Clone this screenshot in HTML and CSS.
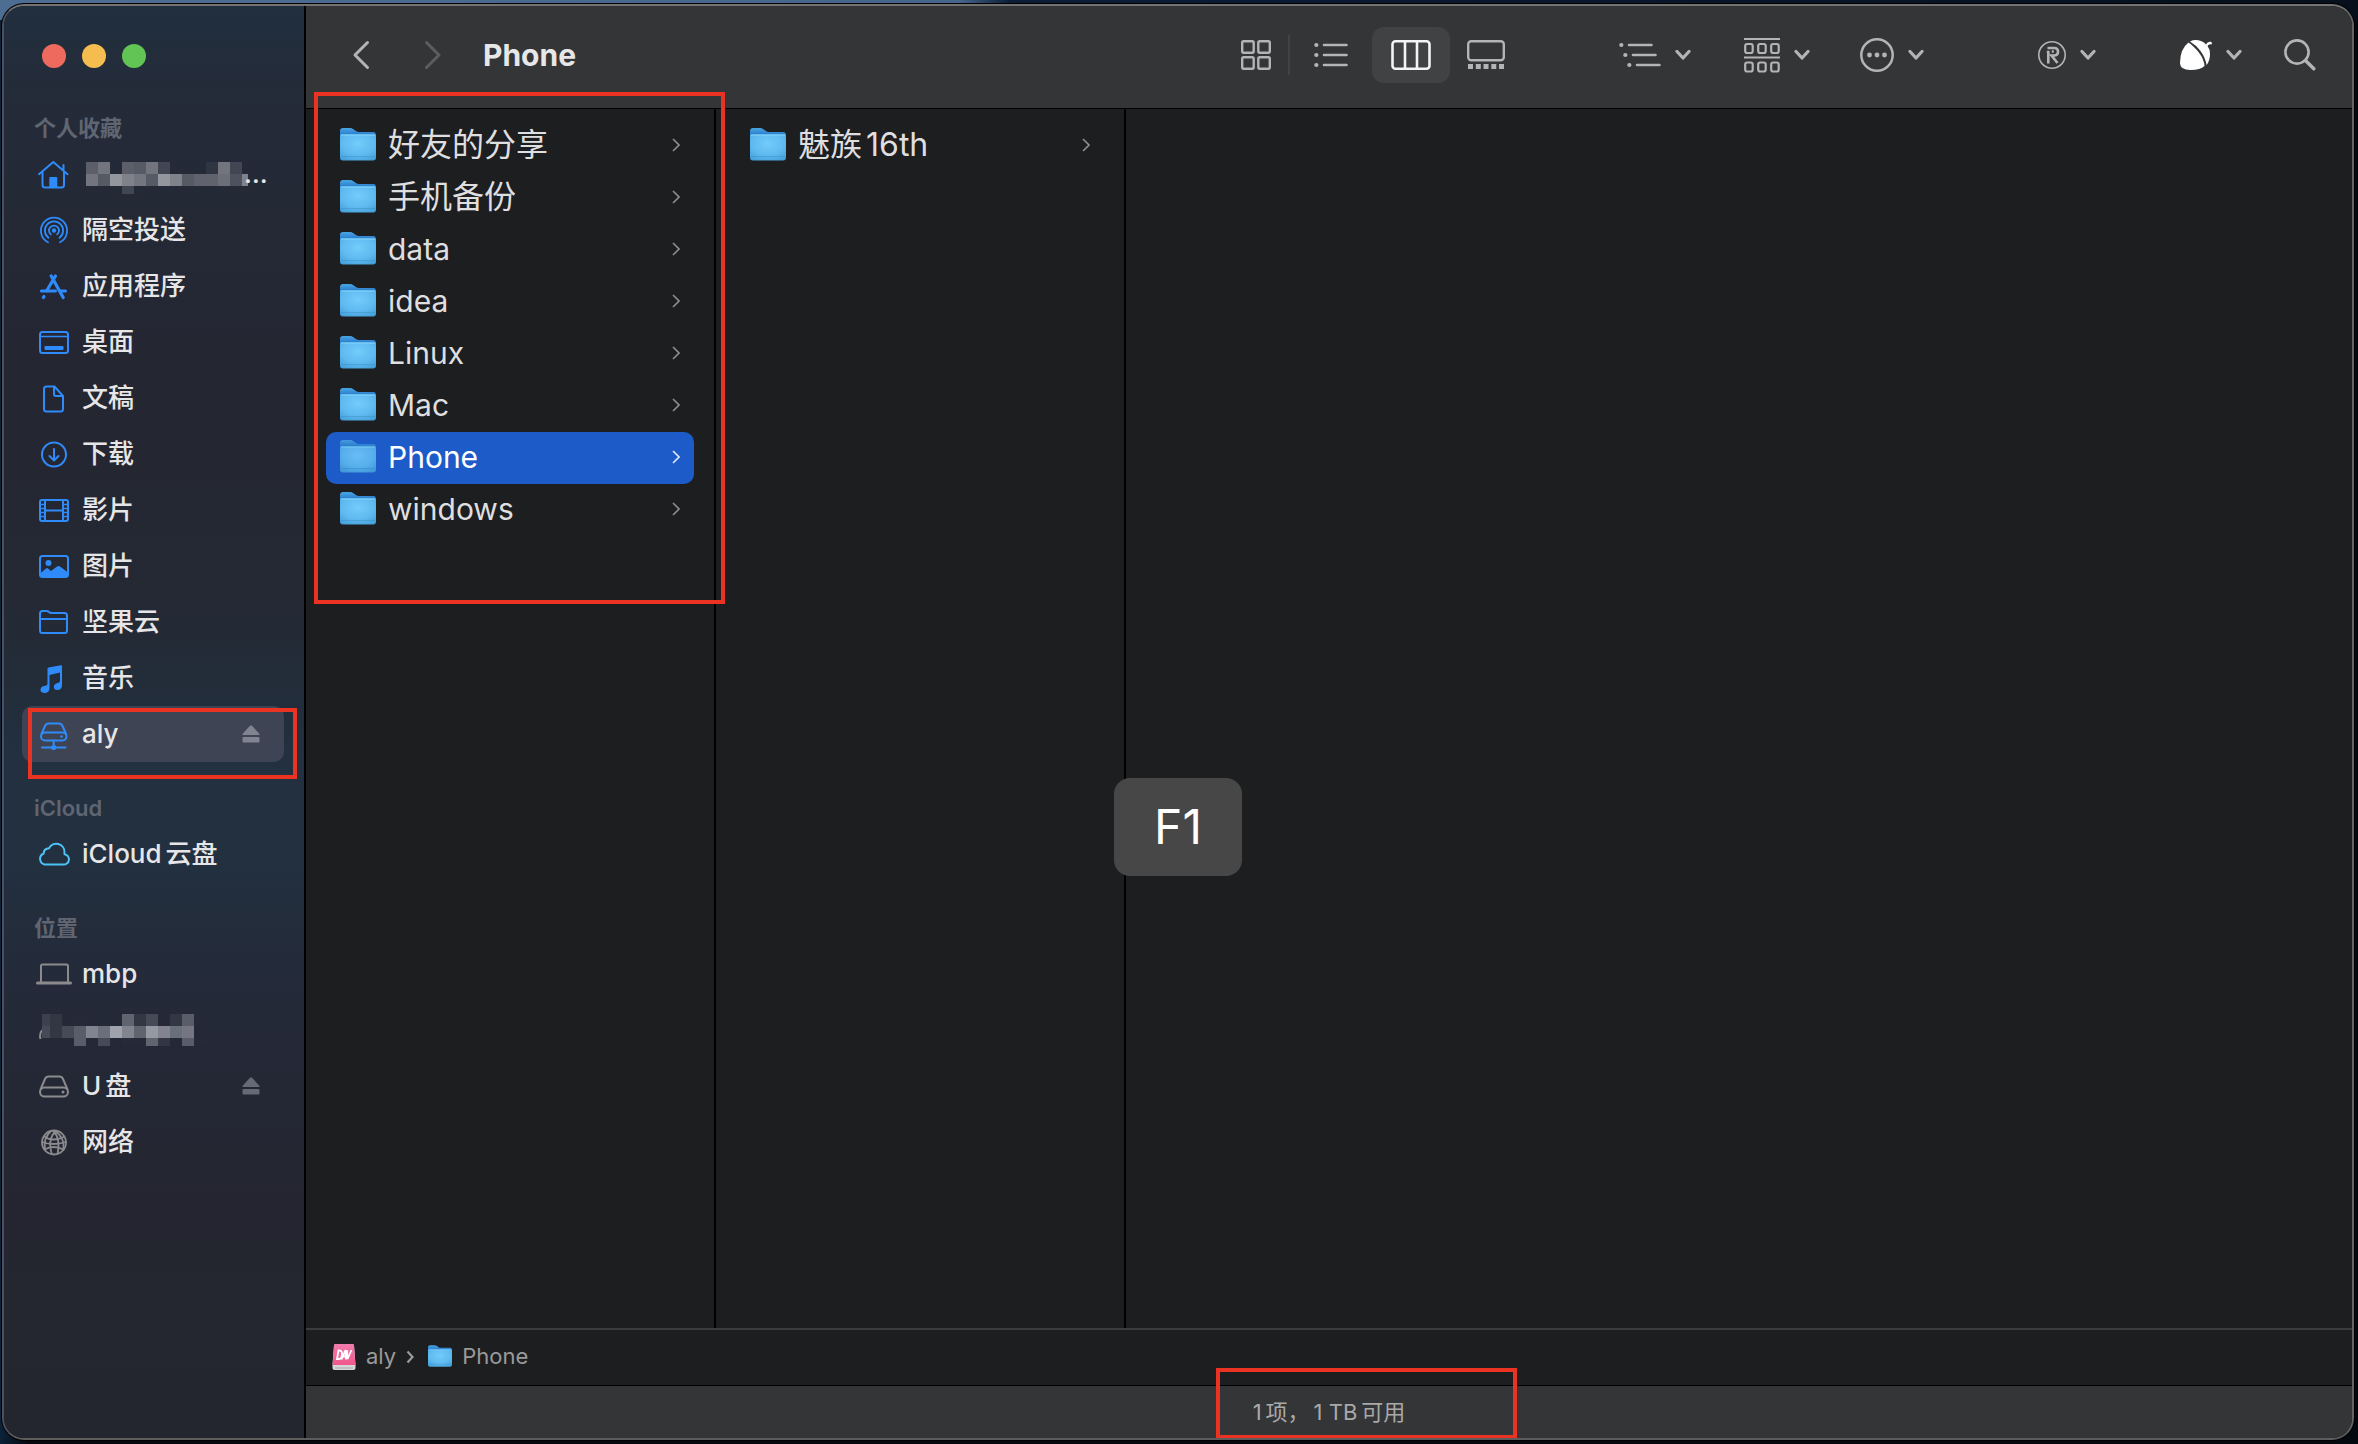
FILE: index.html
```html
<!DOCTYPE html>
<html lang="zh-CN">
<head>
<meta charset="utf-8">
<title>Phone</title>
<link rel="stylesheet" href="styles.css">
</head>
<body>
<svg class="defs" width="0" height="0" aria-hidden="true">
  <defs>
    <linearGradient id="folder-back" x1="0" y1="0" x2="0" y2="1">
      <stop offset="0" stop-color="#4aa5e2"/><stop offset=".2" stop-color="#2f82d0"/><stop offset="1" stop-color="#2f82d0"/>
    </linearGradient>
    <radialGradient id="folder-front" cx=".5" cy=".35" r=".75">
      <stop offset="0" stop-color="#74cbfb"/><stop offset=".6" stop-color="#5fbaf0"/><stop offset="1" stop-color="#459fd9"/>
    </radialGradient>
    <linearGradient id="dav-pink" x1="0" y1="0" x2="0" y2="1">
      <stop offset="0" stop-color="#f27cae"/><stop offset="1" stop-color="#f0578a"/>
    </linearGradient>
  </defs>
  <symbol id="folder" viewBox="0 0 36 34">
    <path d="M0 3q0-3 3-3h7q2 0 3 1l3 2q1 1 3 1h14q3 0 3 3v22H0z" fill="url(#folder-back)"/>
    <path d="M0 7.500q0-1 1-1h34q1 0 1 1v22q0 3-3 3H3q-3 0-3-3z" fill="url(#folder-front)"/>
    <path d="M1 7h34" stroke="#86dafc" stroke-width="1"/>
    <path d="M.5 28.500h35" stroke="#3f97cf" stroke-width="1" opacity=".6"/>
  </symbol>
  <symbol id="chevron-right" viewBox="0 0 8 14"><path d="M1 1l6 6-6 6" fill="none" stroke="currentColor" stroke-width="1.600"/></symbol>
  <symbol id="chevron-down" viewBox="0 0 16 12"><path d="M2 2.500l6 6.500 6-6.500" fill="none" stroke="currentColor" stroke-width="3.200" stroke-linecap="round" stroke-linejoin="round"/></symbol>
  <symbol id="eject" viewBox="0 0 18 18"><path d="M8 .7q1-.9 2 0l7.300 8q.7 1.300-.8 1.300h-15q-1.500 0-.8-1.300z" fill="currentColor"/><rect x=".5" y="12" width="17" height="5.500" rx="1" fill="currentColor"/></symbol>
</svg>

<div class="window">
  <aside class="sidebar">
    <div class="lights">
      <button class="light close" aria-label="关闭"></button>
      <button class="light minimize" aria-label="最小化"></button>
      <button class="light maximize" aria-label="全屏"></button>
    </div>

    <nav class="section">
      <h2>个人收藏</h2>
      <ul>
        <li><a class="place" href="#home">
          <svg class="icon" viewBox="0 0 32 32" fill="none" stroke="currentColor" stroke-width="2" stroke-linejoin="round" stroke-linecap="round"><path d="M1 16.200L15.300 4l14.200 12.200M4.500 14v13q0 2.500 2.500 2.500h16.500q2.500 0 2.500-2.500V14M25.500 12V7"/><path d="M12.300 29v-9h6v9z" fill="currentColor"/></svg>
          <svg class="mosaic name" width="162" height="32" viewBox="0 0 162 32" shape-rendering="crispEdges">
            <path fill="#5c5f69" d="M0 0h12v12H0zM36 0h12v12H36z"/><path fill="#72757d" d="M12 0h12v12H12zM60 0h12v12H60zM132 0h12v12h-12zM0 12h12v12H0z"/><path fill="#565a65" d="M48 0h12v12H48zM12 12h12v12H12zM60 12h12v12H60zM96 12h12v12H96z"/><path fill="#414652" d="M72 0h12v12H72zM144 0h12v12h-12zM36 24h12v8H36z"/><path fill="#303542" d="M120 0h12v12h-12z"/><path fill="#94969d" d="M24 12h12v12H24zM72 12h12v12H72z"/><path fill="#7f828b" d="M36 12h12v12H36zM84 12h12v12H84zM156 12h6v12h-6z"/><path fill="#737680" d="M48 12h12v12H48z"/><path fill="#60636e" d="M108 12h24v12h-24z"/><path fill="#6c6f78" d="M132 12h12v12h-12z"/><path fill="#4e525f" d="M144 12h12v12h-12z"/>
          </svg><span>…</span></a></li>
        <li><a class="place" href="#airdrop">
          <svg class="icon" viewBox="0 0 32 32" fill="none" stroke="currentColor" stroke-width="1.800" stroke-linecap="round"><circle cx="16" cy="16.500" r="2.200" fill="currentColor" stroke="none"/><path d="M12.800 20.400a5 5 0 1 1 6.400 0M10.500 23.800a9.100 9.100 0 1 1 11 0M10 28.300a13.100 13.100 0 1 1 12 0"/></svg>
          <span>隔空投送</span></a></li>
        <li><a class="place" href="#applications">
          <svg class="icon" viewBox="0 0 32 32" fill="none" stroke="currentColor" stroke-width="3.200" stroke-linecap="round"><path d="M17.500 6L8.500 21M13.200 6l12 21.500M3.500 21h14M22.500 21h5M6 26.500l-.6 1"/></svg>
          <span>应用程序</span></a></li>
        <li><a class="place" href="#desktop">
          <svg class="icon" viewBox="0 0 32 32" fill="none" stroke="currentColor" stroke-width="2"><rect x="2" y="6" width="28" height="21" rx="2.500"/><path d="M2 10.500h28" stroke-width="1.500"/><rect x="6.500" y="20" width="19" height="4" rx="1" fill="currentColor" stroke="none"/></svg>
          <span>桌面</span></a></li>
        <li><a class="place" href="#documents">
          <svg class="icon" viewBox="0 0 32 32" fill="none" stroke="currentColor" stroke-width="2" stroke-linejoin="round"><path d="M8.500 4.500h8l8.500 9.500v13q0 2.500-2.500 2.500h-14Q6 29.500 6 27V7q0-2.500 2.500-2.500zM16 4.500v7.500q0 2 2 2h7"/></svg>
          <span>文稿</span></a></li>
        <li><a class="place" href="#downloads">
          <svg class="icon" viewBox="0 0 32 32" fill="none" stroke="currentColor" stroke-width="2" stroke-linecap="round" stroke-linejoin="round"><circle cx="16" cy="16.500" r="12"/><path d="M16 11v11.500M11.500 18l4.500 4.500 4.500-4.500"/></svg>
          <span>下载</span></a></li>
        <li><a class="place" href="#movies">
          <svg class="icon" viewBox="0 0 32 32" fill="none" stroke="currentColor" stroke-width="2"><rect x="2" y="6" width="28" height="21" rx="2"/><path d="M7 6v21M25 6v21M7 16.500h18"/><path d="M2 10.500h5M2 14.500h5M2 18.500h5M2 22.500h5M25 10.500h5M25 14.500h5M25 18.500h5M25 22.500h5" stroke-width="1.500"/></svg>
          <span>影片</span></a></li>
        <li><a class="place" href="#pictures">
          <svg class="icon" viewBox="0 0 32 32" fill="none" stroke="currentColor" stroke-width="2"><rect x="2" y="6" width="28" height="21" rx="2.500"/><circle cx="10.500" cy="13" r="3" fill="currentColor" stroke="none"/><path d="M2 23.500l6-5q1-.8 2 0l3 2.500 6-4.500q1.500-1 3 0l8 6v4H3z" fill="currentColor" stroke="none"/></svg>
          <span>图片</span></a></li>
        <li><a class="place" href="#nutstore">
          <svg class="icon" viewBox="0 0 32 32" fill="none" stroke="currentColor" stroke-width="2" stroke-linejoin="round"><path d="M2 24.500V7.500Q2 5 4.500 5h4q1.500 0 2.500 1t2.500 1h13q2.500 0 2.500 2.500v15q0 2.500-2.500 2.500h-22Q2 27 2 24.500zM2 13h27"/></svg>
          <span>坚果云</span></a></li>
        <li><a class="place" href="#music">
          <svg class="icon" viewBox="0 0 32 32" fill="currentColor"><path d="M9.500 6.800q0-1 1-1.200L23 3.200q1-.2 1 .8v19q0 4.500-4 5-4 .3-4.200-3 0-3.200 4-4 2.200-.3 2.200-2v-8.500L11.500 13v13q0 4.300-3.800 4.900-5 .3-5.200-3 0-3 3.600-3.800 3.400-.5 3.400-2.100z"/></svg>
          <span>音乐</span></a></li>
        <li><a class="place selected" href="#aly">
          <svg class="icon" viewBox="0 0 32 32" fill="none" stroke="currentColor" stroke-width="2" stroke-linejoin="round"><path d="M3.200 16.500L7 8q1-2.500 3.500-2.500h10.500Q23.500 5.500 24.500 8l3.800 8.500"/><rect x="3" y="14.500" width="25.500" height="8" rx="4"/><path d="M15.700 22.500v6M4 29.500h23.500" stroke-linecap="round"/><circle cx="23.500" cy="18.500" r="1.300" fill="currentColor" stroke="none"/><circle cx="15.700" cy="29.500" r="2.600" fill="currentColor" stroke="none"/></svg>
          <span>aly</span><svg class="eject"><use href="#eject"/></svg></a>
          <i class="mark mark-place"></i></li>
      </ul>
    </nav>

    <nav class="section">
      <h2>iCloud</h2>
      <ul>
        <li><a class="place cloud" href="#icloud">
          <svg class="icon" viewBox="0 0 32 32" fill="none" stroke="currentColor" stroke-width="2" stroke-linejoin="round"><path d="M6.500 26.500a5.800 5.800 0 0 1-.8-11q0-4.800 5.300-5.300a8.200 8.200 0 0 1 15.500 4q-.1 1.300 0 2a5.200 5.200 0 0 1-1.500 10.300z"/></svg>
          <span>iCloud<span class="join">云盘</span></span></a></li>
      </ul>
    </nav>

    <nav class="section">
      <h2>位置</h2>
      <ul>
        <li><a class="place device" href="#mbp">
          <svg class="icon wide" viewBox="0 0 36 32" fill="none" stroke="currentColor" stroke-width="2"><path d="M5 24V8q0-1.500 1.500-1.500h24q1.500 0 1.500 1.500v16"/><path d="M1.500 25h33" stroke-width="3" stroke-linecap="round"/></svg>
          <span>mbp</span></a></li>
        <li><a class="place device masked" href="#disk">
          <svg class="mosaic" width="168" height="32" viewBox="0 0 168 32" shape-rendering="crispEdges">
            <path fill="none" stroke="#8b8b8e" stroke-width="2" shape-rendering="auto" d="M4.500 16q-3.500 3-2 9"/>
            <path fill="#3c414d" d="M4 0h8v12H4z"/><path fill="#333744" d="M12 0h12v24H12zM96 0h12v12H96zM132 0h12v12h-12zM120 24h12v8h-12z"/><path fill="#262a38" d="M36 0h12v12H36zM84 24h24v8H84zM156 24h12v8h-12z"/><path fill="#60646f" d="M84 0h12v12H84zM96 12h12v12H96zM108 24h12v8h-12z"/><path fill="#464a57" d="M108 0h12v12h-12zM4 12h8v12H4zM24 12h12v12H24zM60 24h12v8H60z"/><path fill="#595d69" d="M144 0h12v12h-12zM36 12h12v20H36zM144 24h12v8h-12z"/><path fill="#828590" d="M48 12h12v12H48zM84 12h12v12H84zM120 12h12v12h-12z"/><path fill="#6a6f7c" d="M60 12h12v12H60zM132 12h12v12h-12z"/><path fill="#a0a3ac" d="M72 12h12v12H72z"/><path fill="#9799a2" d="M108 12h12v12h-12z"/><path fill="#747781" d="M144 12h12v12h-12z"/>
          </svg></a></li>
        <li><a class="place device" href="#usb">
          <svg class="icon" viewBox="0 0 32 32" fill="none" stroke="currentColor" stroke-width="2" stroke-linejoin="round"><path d="M2.500 19.500L7 9q1-2.500 3.500-2.500h11Q24 6.500 25 9l4.500 10.500"/><rect x="2" y="17.500" width="28" height="9" rx="4.500"/><circle cx="25" cy="22" r="1.500" fill="currentColor" stroke="none"/></svg>
          <span>U<span class="join">盘</span></span><svg class="eject"><use href="#eject"/></svg></a></li>
        <li><a class="place device" href="#network">
          <svg class="icon" viewBox="0 0 32 32" fill="none" stroke="currentColor" stroke-width="1.800"><circle cx="16" cy="16.500" r="12"/><path d="M18 4.500q-9 9-4 24M15 4.500q8 8 4.500 24M17 4.800Q27 12 25.500 24M13 5Q5 12 7 24M6 10.500q9 6 21 0M4 16q11 4 24 0M6.500 23.500q9-5 19 0"/></svg>
          <span>网络</span></a></li>
      </ul>
    </nav>
  </aside>

  <main class="main">
    <header class="toolbar">
      <button class="nav" aria-label="后退"><svg width="18" height="30" viewBox="0 0 18 30"><path d="M15.500 2.500L3 15l12.500 12.500" fill="none" stroke="currentColor" stroke-width="3" stroke-linecap="round" stroke-linejoin="round"/></svg></button>
      <button class="nav" aria-label="前进" disabled><svg width="18" height="30" viewBox="0 0 18 30"><path d="M2.500 2.500L15 15 2.500 27.500" fill="none" stroke="currentColor" stroke-width="3" stroke-linecap="round" stroke-linejoin="round"/></svg></button>
      <h1>Phone</h1>

      <div class="views">
        <button class="view narrow" aria-label="图标"><svg width="30" height="30" viewBox="0 0 30 30" fill="none" stroke="currentColor" stroke-width="2.400"><rect x="1.200" y="1.200" width="11.500" height="11.500" rx="1.500"/><rect x="17.300" y="1.200" width="11.500" height="11.500" rx="1.500"/><rect x="1.200" y="17.300" width="11.500" height="11.500" rx="1.500"/><rect x="17.300" y="17.300" width="11.500" height="11.500" rx="1.500"/></svg></button>
        <span class="separator"></span>
        <button class="view" aria-label="列表"><svg width="34" height="26" viewBox="0 0 34 26" fill="none" stroke="currentColor" stroke-width="2.600" stroke-linecap="round"><path d="M10 3h22.500M10 13h22.500M10 23h22.500"/><path d="M2.300 3h.1M2.300 13h.1M2.300 23h.1" stroke-width="4.200"/></svg></button>
        <button class="view active" aria-label="分栏"><svg width="40" height="30" viewBox="0 0 40 30" fill="none" stroke="currentColor" stroke-width="2.600"><rect x="1.500" y="1.300" width="37" height="27.400" rx="3"/><path d="M14 1v28M26 1v28"/></svg></button>
        <button class="view mid" aria-label="画廊"><svg width="38" height="30" viewBox="0 0 38 30"><rect x="1.200" y="1.200" width="35.600" height="19" rx="3" fill="none" stroke="currentColor" stroke-width="2.400"/><path d="M1 24h5v5H1zM8.800 24h5v5h-5zM16.500 24h5v5h-5zM24.300 24h5v5h-5zM32 24h5v5h-5z" fill="currentColor"/></svg></button>
      </div>

      <div class="menus">
        <button class="menu outline" aria-label="大纲"><svg width="42" height="26" viewBox="0 0 42 26" fill="none" stroke="currentColor" stroke-width="2.600" stroke-linecap="round"><path d="M10 3h22.500M14 13h22.500M18 23h22.500"/><path d="M2.300 3h.1M6.300 13h.1M10.300 23h.1" stroke-width="4.200"/></svg><svg class="chev"><use href="#chevron-down"/></svg></button>
        <button class="menu" aria-label="分组"><svg width="36" height="36" viewBox="0 0 36 36" fill="none" stroke="currentColor" stroke-width="2.200"><path d="M0 2h36M0 20.500h36"/><rect x="1.200" y="7" width="7.500" height="9" rx="2"/><rect x="14.200" y="7" width="7.500" height="9" rx="2"/><rect x="27.200" y="7" width="7.500" height="9" rx="2"/><rect x="1.200" y="25.500" width="7.500" height="9" rx="2"/><rect x="14.200" y="25.500" width="7.500" height="9" rx="2"/><rect x="27.200" y="25.500" width="7.500" height="9" rx="2"/></svg><svg class="chev"><use href="#chevron-down"/></svg></button>
        <button class="menu" aria-label="更多"><svg width="34" height="34" viewBox="0 0 34 34"><circle cx="17" cy="17" r="15.700" fill="none" stroke="currentColor" stroke-width="2.500"/><circle cx="9.500" cy="17" r="2.400" fill="currentColor"/><circle cx="17" cy="17" r="2.400" fill="currentColor"/><circle cx="24.500" cy="17" r="2.400" fill="currentColor"/></svg><svg class="chev"><use href="#chevron-down"/></svg></button>
      </div>

      <button class="menu registered" aria-label="注册标记"><svg width="28" height="28" viewBox="0 0 28 28" fill="none" stroke="currentColor"><circle cx="14" cy="14" r="13.200" stroke-width="1.600"/><path d="M9.500 7H16q4 0 4 3.700t-4 3.800h-2.500l6 7.500M10.300 12v10.500M13.800 10.500h2" stroke-width="2.600"/><circle cx="10.200" cy="11" r="1.600" fill="currentColor" stroke="none"/></svg><svg class="chev"><use href="#chevron-down"/></svg></button>
      <button class="menu nut" aria-label="坚果云"><svg class="acorn" width="32" height="30" viewBox="0 0 32 30" fill="currentColor"><path d="M8.500 2.500Q0 9 0 23q0 7 10.500 7 10 0 14-4-.5-7-6-14Q13 5.500 8.500 2.500z"/><path d="M10 1.500Q15-1 21 1q3.500 1 5 3.500Q27.500 1 31 1.800q1.500 1 .5 2.700-2.500-1-4 1.500Q30 9 30 14q0 7-3.500 11-1-7-6-14Q16 5 10 1.500z"/></svg><svg class="chev"><use href="#chevron-down"/></svg></button>
      <button class="search" aria-label="搜索"><svg width="32" height="32" viewBox="0 0 32 32" fill="none" stroke="currentColor" stroke-linecap="round"><circle cx="13" cy="13" r="11.600" stroke-width="2.600"/><path d="M21.500 21.500l8.300 8.300" stroke-width="3.400"/></svg></button>
    </header>

    <div class="browser">
      <ul class="column">
        <li><a class="row han" href="#share"><svg class="folder"><use href="#folder"/></svg><span>好友的分享</span><svg class="more"><use href="#chevron-right"/></svg></a></li>
        <li><a class="row han" href="#backup"><svg class="folder"><use href="#folder"/></svg><span>手机备份</span><svg class="more"><use href="#chevron-right"/></svg></a></li>
        <li><a class="row" href="#data"><svg class="folder"><use href="#folder"/></svg><span>data</span><svg class="more"><use href="#chevron-right"/></svg></a></li>
        <li><a class="row" href="#idea"><svg class="folder"><use href="#folder"/></svg><span>idea</span><svg class="more"><use href="#chevron-right"/></svg></a></li>
        <li><a class="row" href="#linux"><svg class="folder"><use href="#folder"/></svg><span>Linux</span><svg class="more"><use href="#chevron-right"/></svg></a></li>
        <li><a class="row" href="#mac"><svg class="folder"><use href="#folder"/></svg><span>Mac</span><svg class="more"><use href="#chevron-right"/></svg></a></li>
        <li><a class="row selected" href="#phone"><svg class="folder"><use href="#folder"/></svg><span>Phone</span><svg class="more"><use href="#chevron-right"/></svg></a></li>
        <li><a class="row" href="#windows"><svg class="folder"><use href="#folder"/></svg><span>windows</span><svg class="more"><use href="#chevron-right"/></svg></a></li>
        <li class="mark mark-list" aria-hidden="true"></li>
      </ul>
      <ul class="column">
        <li><a class="row han" href="#meizu"><svg class="folder"><use href="#folder"/></svg><span>魅族<span class="join">16th</span></span><svg class="more"><use href="#chevron-right"/></svg></a></li>
      </ul>
    </div>

    <div class="pathbar">
      <svg width="24" height="26" viewBox="0 0 24 26"><path d="M2 1.500Q2 0 3.500 0h17Q22 0 22 1.500L23.500 20v4q0 2-2 2h-19q-2 0-2-2v-4z" fill="#d6d6d8"/><path d="M2 1.500Q2 0 3.500 0h17Q22 0 22 1.500L23.300 21H.7z" fill="url(#dav-pink)"/><path d="M3 24h18" stroke="#a9a9ab"/><g fill="none" stroke="#fff" stroke-width="1.800"><path d="M6.500 6.500L5 15h1.500q3 0 3.500-4.200T7.500 6.500zM9.500 15.500l4-9.500.5 9.500M11 12.500h3M15 6l.5 9L19.500 6"/></g></svg>
      <span>aly</span>
      <svg class="step" viewBox="0 0 8 14"><path d="M1.500 1.500L6.500 7l-5 5.500" fill="none" stroke="currentColor" stroke-width="2.200"/></svg>
      <svg class="folder-small"><use href="#folder"/></svg>
      <span>Phone</span>
    </div>
    <footer class="status">1<span class="join">项，</span><span class="join">1 TB</span><span class="join">可用</span><i class="mark mark-status"></i></footer>
  </main>
</div>
<div class="keycap">F1</div>
</body>
</html>
```

FILE: styles.css
```css
* { box-sizing: border-box; margin: 0; padding: 0; }

body {
  position: relative;
  display: flex;
  min-height: 100vh;
  padding: 4px 4px 4px 2px;
  background:
    linear-gradient(90deg, #4d6d92 0, #45658c 960px, #0c1d38 1010px, #06101d 100%) top / 100% 20px no-repeat,
    linear-gradient(90deg, #0b2238 0, #04080f 30px, #04080f 100%);
  color: #dfdfe0;
  font-family: Inter, "Noto Sans CJK SC", sans-serif;
  line-height: 1.2;
}

ul { list-style: none; }
a { color: inherit; text-decoration: none; }
svg { flex: none; }
button { border: 0; background: none; color: inherit; font: inherit; }
.defs { position: absolute; }

/* Thin gap where Han and Latin text meet */
.join { margin-left: 4px; }

.window {
  flex: 1;
  display: flex;
  overflow: hidden;
  border: 2px solid;
  border-color: #737373 #646464 #5c5c5c #4b505a;
  border-radius: 22px;
  box-shadow: 0 0 0 1px #000;
  background: #1d1e1f;
}

/* Sidebar */
.sidebar {
  flex: 0 0 302px;
  min-width: 0;
  border-right: 2px solid #000;
  background: linear-gradient(#212f3e 0, #242b39 90px, #242936 200px, #242631 400px, #242934 590px, #22303f 750px, #22303f 850px, #242a39 980px, #242530 1200px, #23262f 100%);
}
.lights { display: flex; gap: 16px; padding: 38px 38px 14px; }
.light { width: 24px; height: 24px; border-radius: 50%; }
.close { background: #ee6a5f; }
.minimize { background: #f5bd4f; }
.maximize { background: #61c455; }

.section h2 {
  padding: 28px 30px 0;
  color: #606572;
  font-size: 22px;
  font-weight: 600;
  line-height: 36px;
}
.section li { position: relative; margin: 0 20px 0 18px; }
.place {
  display: flex;
  align-items: center;
  gap: 12px;
  height: 56px;
  padding: 0 24px 0 16px;
  border-radius: 10px;
  color: #e6e6e8;
  font-size: 26px;
  font-weight: 500;
}
.place.selected { background: #3e4453; }
.icon { width: 32px; height: 32px; color: #2f8bfa; }
.icon.wide { width: 36px; margin: 0 -2px; }
.cloud .icon { color: #4cc2f9; }
.device .icon { color: #8b8b8e; }
.eject { width: 18px; height: 18px; margin-left: auto; color: #7f8490; }
.device .eject { color: #666a75; }
.mosaic.name { margin: 8px 0 0 4px; }
.mosaic.name + span { margin-left: -16px; }

/* Main area */
.main { flex: 1; min-width: 0; display: flex; flex-direction: column; }
.toolbar {
  display: flex;
  align-items: center;
  height: 103px;
  padding: 0 36px 4px 37px;
  border-bottom: 1px solid #000;
  background: #343536;
  color: #b4b4b5;
}
.toolbar button { display: flex; align-items: center; justify-content: center; }
.nav { width: 36px; height: 56px; margin-right: 36px; }
.nav:disabled { color: #5c5d5e; }
.toolbar h1 { margin-left: -4px; color: #e7e7e8; font-size: 30px; font-weight: 700; line-height: 40px; }
.views { display: flex; align-items: center; gap: 2px; margin-left: auto; }
.view { width: 78px; height: 56px; border-radius: 12px; }
.view.narrow { width: 60px; }
.view.mid { width: 68px; }
.view.active { background: #414243; color: #f4f4f4; }
.separator { width: 2px; height: 40px; background: #424344; }
.menus { display: flex; gap: 50px; margin-left: 99px; }
.toolbar .menu { gap: 14px; height: 56px; }
.menu.outline { margin-right: 3px; }
.chev { width: 16px; height: 12px; }
.registered { margin-left: 114px; }
.nut { margin-left: 84px; }
.acorn { color: #fff; }
.search { height: 56px; margin-left: 42px; }

.browser { flex: 1; display: flex; }
.column { position: relative; width: 410px; padding: 11px 20px; border-right: 2px solid #000; }
.row {
  display: flex;
  align-items: center;
  gap: 12px;
  height: 52px;
  padding: 0 14px 2px;
  border-radius: 10px;
  font-size: 30px;
}
.row.han { font-size: 32px; }
.row.selected { background: #1c5bc8; color: #fff; }
.folder { width: 36px; height: 34px; }
.row.selected .folder { opacity: .88; }
.more { width: 8px; height: 14px; margin-left: auto; color: #8e8e8f; }
.row.selected .more { color: #e2e8f6; }

.pathbar {
  display: flex;
  align-items: center;
  height: 58px;
  padding: 0 26px 2px;
  border-top: 2px solid #3b3c3d;
  border-bottom: 1px solid #000;
  color: #9a9a9b;
  font-size: 22px;
}
.pathbar > span { margin: 0 10px; }
.step { width: 8px; height: 14px; margin-right: 14px; }
.folder-small { width: 24px; height: 23px; }
.status {
  position: relative;
  height: 52px;
  background: #343536;
  color: #a9a9aa;
  font-size: 22px;
  line-height: 52px;
  text-align: center;
}

/* Red annotation frames drawn over the window */
.mark { position: absolute; border: 4px solid #ea3323; pointer-events: none; }
.section .mark-place { inset: 2px -13px -17px 6px; }
.mark-list { top: -17px; left: 8px; right: -11px; height: 512px; z-index: 1; }
.mark-status { top: -18px; left: 50%; width: 301px; height: 71px; margin-left: -113px; }

.keycap {
  position: absolute;
  top: 778px;
  left: 50%;
  width: 128px;
  margin-left: -65px;
  border-radius: 16px;
  background: rgba(74, 74, 74, .94);
  color: #fff;
  font-size: 48px;
  line-height: 98px;
  text-align: center;
}
```
